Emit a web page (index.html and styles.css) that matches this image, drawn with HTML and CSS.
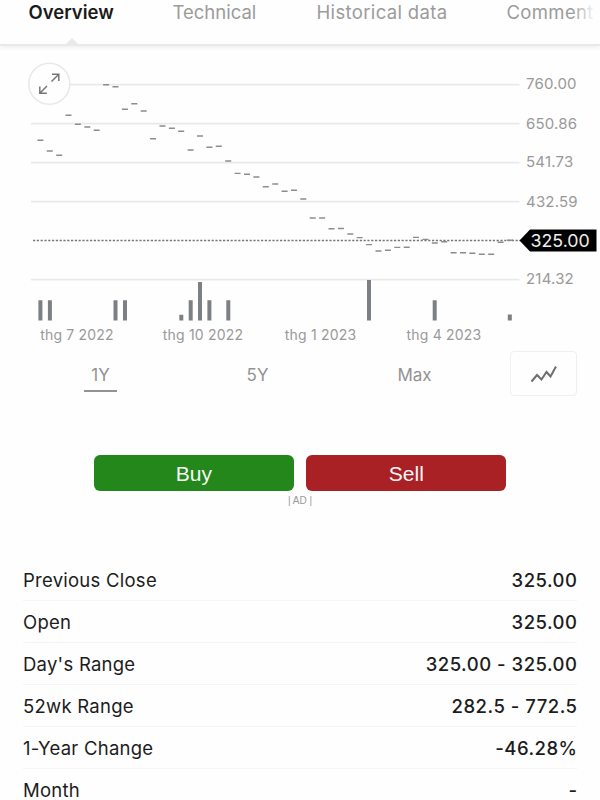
FILE: index.html
```html
<!DOCTYPE html>
<html lang="en">
<head>
  <meta charset="UTF-8">
  <meta name="viewport" content="width=device-width, initial-scale=1.0">
  <title>Stock Overview</title>
  <link rel="stylesheet" href="styles.css">
</head>
<body>
  <!-- Tabs -->
  <nav class="tabs">
    <a class="tab active">Overview</a>
    <a class="tab tab-technical">Technical</a>
    <a class="tab tab-historical">Historical data</a>
    <a class="tab tab-comment">Comment</a>
  </nav>

  <main>
    <!-- Price chart -->
    <section class="chart">
      <svg class="chart-svg" width="600" height="300" viewBox="0 46 600 300">
        <path class="grid" d="M31 84.7H519.5M31 123.7H519.5M31 162.7H519.5M31 201.7H519.5M31 279.6H519.5"/>
        <path class="current-line" d="M33 240.5H521"/>
        <path class="ticks" d="M37.4 140.3h6M46.8 151h6M56.2 155.3h6M65.5 115.3h6M74.9 124.3h6M84.3 127h6M93.7 130.3h6M103.1 84.7h6M112.5 86.7h6M121.9 109.3h6M131.3 103.7h6M140.7 111h6M150.1 138.7h6M159.5 126h6M168.9 128.3h6M178.2 131.3h6M187.6 150h6M197 136h6M206.4 147.3h6M215.8 146.3h6M225.2 161h6M234.6 173.4h6M244 174.3h6M253.4 177h6M262.8 186.7h6M272.2 184h6M281.6 191.3h6M291 190.3h6M300.3 199h6M309.7 218h6M319.1 218h6M328.5 228.7h6M337.9 228.5h6M347.3 234h6M356.7 237.6h6M366.1 244.6h6M375.5 251h6M384.9 250.3h6M394.3 247.4h6M403.7 247.3h6M413 237.4h6M422.4 239.4h6M431.8 243h6M441.2 241.7h6M450.6 252.7h6M460 252.7h6M469.4 253.3h6M478.8 254.3h6M488.2 254.3h6M497.6 242.3h6M507 240.3h6"/>
        <path class="volume" d="M40.4 320.6V300.3M49.9 320.6V300.3M115.5 320.6V300.3M125 320.6V300.3M181.3 320.6V314.7M190.7 320.6V300.3M200 320.6V282M209.4 320.6V300.3M228.3 320.6V300.3M369 320.6V280M434.7 320.6V300.3M509.8 320.6V314.5"/>
        <g class="y-labels">
          <text x="526" y="89.3">760.00</text>
          <text x="526" y="128.6">650.86</text>
          <text x="526" y="167.3">541.73</text>
          <text x="526" y="206.6">432.59</text>
          <text x="526" y="284.3">214.32</text>
        </g>
        <g class="x-labels">
          <text x="77" y="340">thg 7 2022</text>
          <text x="203" y="340">thg 10 2022</text>
          <text x="320.5" y="340">thg 1 2023</text>
          <text x="444" y="340">thg 4 2023</text>
        </g>
        <path d="M519.5 240.5L530 229.5H596.5V251.5H530Z"/>
        <text class="current-price" x="530.5" y="246.8">325.00</text>
        <!-- expand button -->
        <circle class="expand" cx="49.3" cy="83.7" r="20.5"/>
        <path class="expand-icon" d="M51.5 81.5L58.8 74.2M52 74.2H58.8V81M47 86L39.8 93.2M39.8 86.4V93.2H46.8"/>
      </svg>
    </section>

    <!-- Time range -->
    <section class="ranges">
      <span class="range selected">1Y</span>
      <span class="range">5Y</span>
      <span class="range">Max</span>
      <span class="chart-type">
        <svg width="28" height="20" viewBox="0 0 28 20">
          <path d="M1.5 17.5L7 11L11.5 15.5L16.5 8L20.5 12.5L26 2.5"/>
        </svg>
      </span>
    </section>

    <!-- Trade buttons -->
    <section class="trade">
      <a class="trade-button buy">Buy</a>
      <a class="trade-button sell">Sell</a>
    </section>
    <div class="ad-label">| AD |</div>

    <!-- Key figures -->
    <section class="stats">
      <div class="stat"><span>Previous Close</span><span class="value">325.00</span></div>
      <div class="stat"><span>Open</span><span class="value">325.00</span></div>
      <div class="stat"><span>Day's Range</span><span class="value">325.00 - 325.00</span></div>
      <div class="stat"><span>52wk Range</span><span class="value">282.5 - 772.5</span></div>
      <div class="stat"><span>1-Year Change</span><span class="value">-46.28%</span></div>
      <div class="stat"><span>Month</span><span class="value">-</span></div>
    </section>
  </main>
</body>
</html>
```
FILE: styles.css
```css
* {
  box-sizing: border-box;
}

body {
  margin: 0;
  height: 800px;
  overflow: hidden;
  background: #fefefe;
  color: #1c1c1c;
  font-family: Inter, "Liberation Sans", sans-serif;
}

/* Tabs */
.tabs {
  position: relative;
  display: flex;
  height: 46px;
  padding-left: 28.5px;
  border-bottom: 2px solid #e9e9e9;
  box-shadow: 0 2px 4px rgba(0, 0, 0, 0.06);
  white-space: nowrap;
}

.tabs::before {
  content: '';
  position: absolute;
  left: 66px;
  bottom: 0;
  border: 6px solid transparent;
  border-top: 0;
  border-bottom-color: #e9e9e9;
}

.tabs::after {
  content: '';
  position: absolute;
  top: 0;
  right: 0;
  width: 28px;
  height: 40px;
  background: linear-gradient(to right, rgba(254, 254, 254, 0), #fefefe 85%);
}

.tab {
  flex: none;
  color: #9b9b9b;
  font-size: 18.5px;
  line-height: 25px;
}

.tab.active {
  width: 144px;
  color: #1a1a1a;
  font-weight: 600;
}

.tab-technical {
  width: 144px;
}

.tab-historical {
  width: 190px;
  letter-spacing: 0.35px;
}

.tab-comment {
  letter-spacing: 0.35px;
}

/* Chart */
.chart {
  height: 300px;
}

.chart-svg {
  display: block;
}

.grid {
  stroke: #e9e9e9;
  stroke-width: 1.7;
}

.current-line {
  stroke: #777;
  stroke-width: 1.5;
  stroke-dasharray: 2.2 1.6;
}

.ticks {
  fill: none;
  stroke: #8c8c8c;
  stroke-width: 1.4;
}

.volume {
  stroke: #7c7f84;
  stroke-width: 4;
}

.y-labels,
.x-labels {
  fill: #999;
  font-size: 15px;
  letter-spacing: 0.2px;
}

.x-labels {
  font-size: 14px;
  text-anchor: middle;
}

.current-price {
  fill: #eee;
  font-size: 17.8px;
}

.expand {
  fill: #fefefe;
  stroke: #e8e8e8;
  stroke-width: 1.5;
}

.expand-icon {
  fill: none;
  stroke: #777;
  stroke-width: 1.5;
}

/* Time range */
.ranges {
  display: grid;
  grid-template-columns: 157px 157px 157px 67px;
  margin-top: 5px;
  padding-left: 22px;
  height: 46px;
}

.range {
  justify-self: center;
  height: 41px;
  padding: 0 7px;
  color: #929292;
  font-size: 17px;
  line-height: 48px;
}

.range.selected {
  border-bottom: 2.5px solid #929292;
}

.chart-type {
  display: flex;
  align-items: center;
  justify-content: center;
  margin-left: 17px;
  width: 67px;
  height: 45px;
  border: 1.5px solid #efefef;
  border-radius: 4px;
}

.chart-type path {
  fill: none;
  stroke: #6e6e6e;
  stroke-width: 2;
}

/* Trade buttons */
.trade {
  display: flex;
  gap: 12.5px;
  margin: 58px 0 0 93.8px;
}

.trade-button {
  width: 200px;
  height: 36px;
  border-radius: 6px;
  color: #f7f7f7;
  font-family: "Liberation Sans", Arial, sans-serif;
  font-size: 21px;
  line-height: 37px;
  text-align: center;
}

.buy {
  background: #23871b;
}

.sell {
  background: #a92125;
}

.ad-label {
  margin-top: 3px;
  color: #999;
  font-family: "Liberation Sans", Arial, sans-serif;
  font-size: 10px;
  line-height: 13px;
  text-align: center;
}

/* Key figures */
.stats {
  margin: 52px 23px 0;
}

.stat {
  display: flex;
  justify-content: space-between;
  height: 42px;
  border-bottom: 1px solid #f5f5f5;
  font-size: 18.5px;
  letter-spacing: 0.25px;
  line-height: 43px;
}

.value {
  margin-right: -0.5px;
  font-weight: 500;
  letter-spacing: 0.5px;
}
```
